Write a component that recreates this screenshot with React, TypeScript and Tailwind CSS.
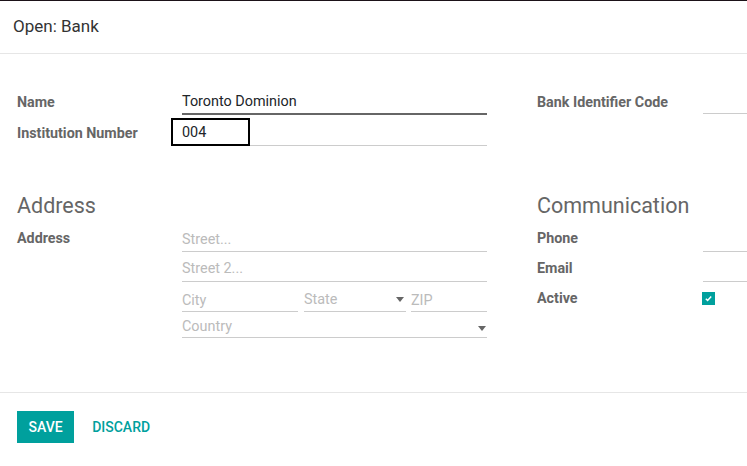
import React from 'react';

function Caret({ className = '' }: { className?: string }) {
    return (
        <svg width="8" height="5" viewBox="0 0 8 5" className={className}>
            <path d="M0 0 L8 0 L4 5 Z" fill="#666" />
        </svg>
    );
}

function Label({ children, w = 'w-[165px]', lh = 'leading-[26px]' }: { children: React.ReactNode; w?: string; lh?: string }) {
    return <div className={`${w} ${lh} shrink-0 text-[14.3px] font-bold text-[#666]`}>{children}</div>;
}

export default function App() {
    return (
        <div className="w-[747px] h-[466px] flex flex-col overflow-hidden bg-white border-t border-[#1b1218] text-[#212529]" style={{ fontFamily: "Roboto, 'Liberation Sans', sans-serif" }}>
            {/* Header */}
            <header className="h-[53px] shrink-0 border-b border-[#e6e6e6] px-[13px] flex items-center">
                <h4 className="text-[17px] text-[#333] leading-none pb-[1px]">Open: Bank</h4>
            </header>

            {/* Body */}
            <div className="flex-1 pl-[17px] pt-[35px] flex gap-[50px]">
                {/* Left group */}
                <div className="w-[470px] shrink-0 flex flex-col">
                    <div className="flex h-[26px]">
                        <Label>Name</Label>
                        <div className="flex-1 border-b-2 border-[#666] text-[14.4px] leading-[26px]">Toronto Dominion</div>
                    </div>
                    <div className="flex h-[27px] mt-[4px]">
                        <Label lh="leading-[28px]">Institution Number</Label>
                        <div className="relative flex-1 border-b border-[#ccc] text-[14.4px] leading-[27px]">
                            <div className="absolute -left-[11px] -top-[1px] w-[79px] h-[28px] border-2 border-black" />
                            004
                        </div>
                    </div>

                    <div className="mt-[45px] text-[21.5px] leading-[30px] text-[#666]">Address</div>

                    <div className="flex mt-[6px]">
                        <Label lh="leading-[22px]">Address</Label>
                        <div className="flex-1 flex flex-col text-[14.4px] text-[#bbb]">
                            <div className="h-[25px] border-b border-[#ccc] leading-[26px]">Street...</div>
                            <div className="h-[25px] mt-[5px] border-b border-[#ccc] leading-[24px]">Street 2...</div>
                            <div className="flex mt-[5px] h-[25px]">
                                <div className="w-[116px] border-b border-[#ccc] leading-[27px]">City</div>
                                <div className="w-[102px] ml-[6px] border-b border-[#ccc] leading-[27px] flex items-center justify-between pr-[2px]">
                                    <span>State</span>
                                    <Caret className="mb-[-1px]" />
                                </div>
                                <div className="flex-1 ml-[5px] border-b border-[#ccc] leading-[27px]">ZIP</div>
                            </div>
                            <div className="h-[22px] mt-[4px] border-b border-[#ccc] leading-[24px] flex items-center justify-between pr-[1px]">
                                <span>Country</span>
                                <Caret className="mt-[3px]" />
                            </div>
                        </div>
                    </div>
                </div>

                {/* Right group */}
                <div className="w-[380px] shrink-0 flex flex-col">
                    <div className="flex h-[26px]">
                        <Label w="w-[166px]">Bank Identifier Code</Label>
                        <div className="flex-1 h-[25px] border-b border-[#ccc]" />
                    </div>
                    <div className="h-[27px] mt-[4px]" />

                    <div className="mt-[45px] text-[21.5px] leading-[30px] text-[#666]">Communication</div>

                    <div className="flex flex-col mt-[6px]">
                        <div className="flex h-[25px]">
                            <Label w="w-[166px]" lh="leading-[22px]">Phone</Label>
                            <div className="flex-1 border-b border-[#ccc]" />
                        </div>
                        <div className="flex h-[25px] mt-[5px]">
                            <Label w="w-[166px]" lh="leading-[22px]">Email</Label>
                            <div className="flex-1 border-b border-[#ccc]" />
                        </div>
                        <div className="flex h-[25px] mt-[5px]">
                            <Label lh="leading-[22px]">Active</Label>
                            <div className="mt-[5px] w-[13px] h-[13px] bg-[#00a09d] flex items-center justify-center">
                                <svg width="9" height="9" viewBox="0 0 9 9">
                                    <path d="M1.8 4.8 L3.6 6.4 L7.2 2.6" stroke="white" strokeWidth="1.5" fill="none" />
                                </svg>
                            </div>
                        </div>
                    </div>
                </div>
            </div>

            {/* Footer */}
            <footer className="h-[74px] shrink-0 border-t border-[#e6e6e6] pt-[18px] px-[17px] flex items-start">
                <button className="h-[32px] px-[11.5px] bg-[#00a09d] text-white text-[14px] font-medium uppercase">Save</button>
                <button className="h-[32px] ml-[18px] text-[#00a09d] text-[14px] font-medium uppercase">Discard</button>
            </footer>
        </div>
    );
}
